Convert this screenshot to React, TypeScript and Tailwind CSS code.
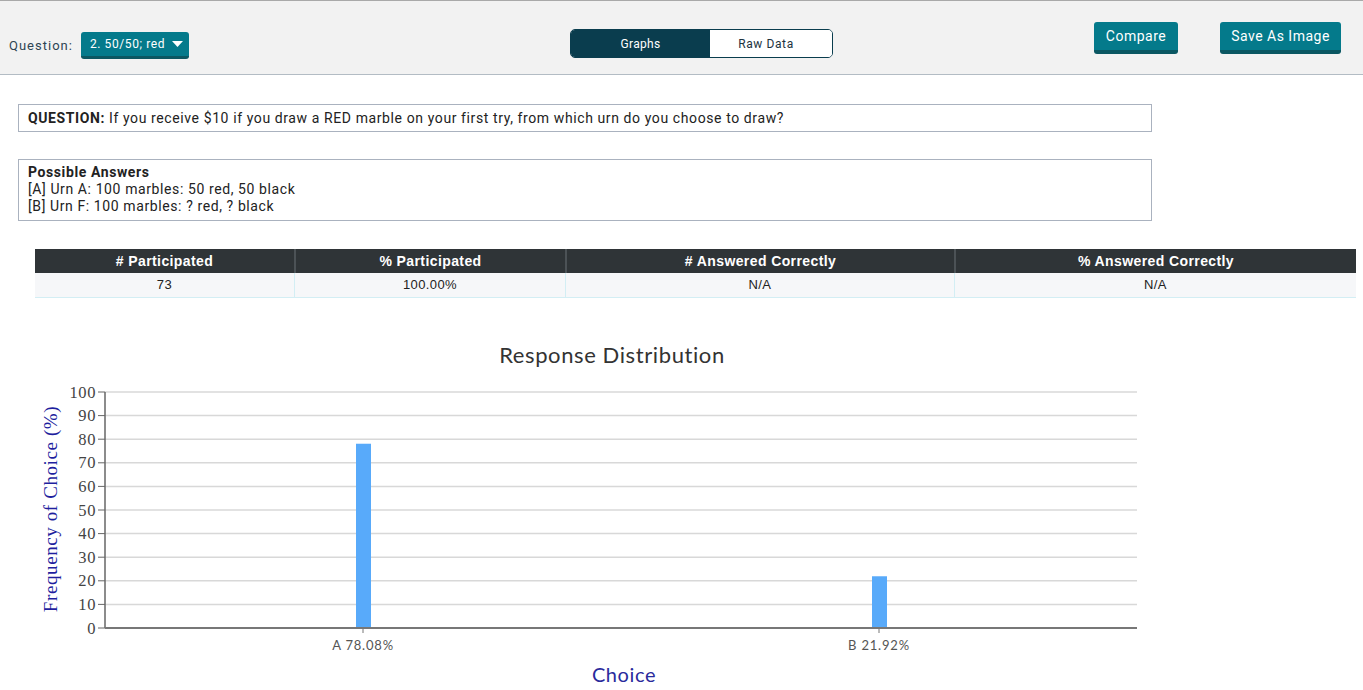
import React from 'react';

const stats = [
  { label: '# Participated', value: '73', w: 'w-[259px]' },
  { label: '% Participated', value: '100.00%', w: 'w-[271px]' },
  { label: '# Answered Correctly', value: 'N/A', w: 'w-[389px]' },
  { label: '% Answered Correctly', value: 'N/A', w: 'flex-1' },
];

const bars = [
  { label: 'A 78.08%', value: 78.08 },
  { label: 'B 21.92%', value: 21.92 },
];

// plot geometry (svg coords, svg top sits at page y=330)
const X0 = 105;
const X1 = 1137;
const Y0 = 298; // value 0
const Y100 = 62; // value 100
const yOf = (v: number) => Y0 - ((Y0 - Y100) * v) / 100;

const Chart: React.FC = () => {
  const ticks = [0, 10, 20, 30, 40, 50, 60, 70, 80, 90, 100];
  const band = (X1 - X0) / bars.length;
  return (
    <svg width={1363} height={360} className="block">
      <text x={612} y={33} textAnchor="middle" fontSize={22} letterSpacing={0.6} fill="#333" fontFamily="Lato, 'Open Sans', sans-serif">
        Response Distribution
      </text>
      {ticks.map((t) => (
        <g key={t}>
          {t > 0 && <line x1={X0} x2={X1} y1={yOf(t)} y2={yOf(t)} stroke="#d8d8d8" strokeWidth={1.5} />}
          <line x1={98} x2={X0} y1={yOf(t)} y2={yOf(t)} stroke="#666" strokeWidth={1} />
          <text x={96} y={yOf(t) + 5.5} textAnchor="end" fontSize={16.5} fill="#444" fontFamily="'Liberation Serif', serif">
            {t}
          </text>
        </g>
      ))}
      {bars.map((b, i) => {
        const cx = X0 + band * (i + 0.5);
        return (
          <g key={b.label}>
            <rect x={cx - 7} y={yOf(b.value)} width={15} height={Y0 - yOf(b.value)} fill="#58aafa" />
            <line x1={cx} x2={cx} y1={Y0} y2={Y0 + 5} stroke="#777" strokeWidth={1} />
            <text x={cx} y={320} textAnchor="middle" fontSize={13} letterSpacing={0.8} fill="#555" fontFamily="Lato, sans-serif">
              {b.label}
            </text>
          </g>
        );
      })}
      <line x1={X0} x2={X0} y1={Y100} y2={Y0} stroke="#666" strokeWidth={1.5} />
      <line x1={X0} x2={X1} y1={Y0} y2={Y0} stroke="#777" strokeWidth={2} />
      <text
        transform="translate(57 179) rotate(-90)"
        textAnchor="middle"
        fontSize={19}
        fill="#1f1f9e"
        fontFamily="'Liberation Serif', serif"
      >
        Frequency of Choice (%)
      </text>
      <text x={624} y={352} textAnchor="middle" fontSize={20} letterSpacing={0.6} fill="#2a2a9c" fontFamily="Lato, sans-serif">
        Choice
      </text>
    </svg>
  );
};

export default function App() {
  return (
    <div className="min-h-[690px] bg-white font-['Roboto',sans-serif] tracking-[0.6px] overflow-hidden">
      {/* top bar */}
      <div className="h-[75px] bg-[#f2f2f2] border-t border-t-[#a9a9a9] border-b border-b-[#b3bcc4] flex items-start pl-[9px]">
        <div className="w-[561px] flex items-center gap-[8px] pt-[31px]">
          <span className="text-[13px] text-[#2e4452] tracking-[1px]">Question:</span>
          <button className="h-[27px] w-[108px] bg-[#047a8b] border-b-[3px] border-[#0b5762] rounded-[3px] text-white text-[12px] flex items-center pl-[9px] gap-[7px]">
            <span>2. 50/50; red</span>
            <svg width="11" height="6" viewBox="0 0 11 6">
              <path d="M0 0 L11 0 L5.5 6 Z" fill="#fff" />
            </svg>
          </button>
        </div>
        <div className="mt-[28px] w-[263px] h-[29px] border border-[#0a3d4e] rounded-[5px] flex overflow-hidden text-[12px] tracking-[0.3px]">
          <div className="w-[139px] bg-[#0a3d4e] text-white flex items-center justify-center">Graphs</div>
          <div className="flex-1 bg-white text-[#1d3340] flex items-center justify-center pr-[10px] tracking-[0.6px]">Raw Data</div>
        </div>
        <button className="mt-[21px] ml-[261px] w-[84px] h-[32px] bg-[#047a8b] border-b-[4px] border-[#0b5762] rounded-[3px] text-white text-[14px] tracking-[0.5px]">
          Compare
        </button>
        <button className="mt-[21px] ml-[42px] w-[121px] h-[32px] bg-[#047a8b] border-b-[4px] border-[#0b5762] rounded-[3px] text-white text-[14px] tracking-[0.5px]">
          Save As Image
        </button>
      </div>

      {/* question */}
      <div className="ml-[18px] mt-[29px] w-[1134px] h-[28px] border border-[#aab2bf] flex items-center px-[9px] text-[14px] text-[#222]">
        <span className="font-bold mr-[4px]">QUESTION:</span>
        If you receive $10 if you draw a RED marble on your first try, from which urn do you choose to draw?
      </div>

      <div className="ml-[18px] mt-[27px] w-[1134px] border border-[#aab2bf] px-[9px] pt-[4px] pb-[5px] text-[14px] leading-[17px] text-[#222]">
        <div className="font-bold">Possible Answers</div>
        <div>[A] Urn A: 100 marbles: 50 red, 50 black</div>
        <div>[B] Urn F: 100 marbles: ? red, ? black</div>
      </div>

      {/* stats table */}
      <div className="ml-[35px] mt-[28px] w-[1321px] text-center font-['Liberation_Sans',sans-serif] tracking-[0.4px]">
        <div className="flex h-[24px] bg-[#2f3437] text-white text-[14px] font-bold">
          {stats.map((s, i) => (
            <div key={s.label} className={`${s.w} flex items-center justify-center ${i > 0 ? 'border-l-2 border-[#4c5256]' : ''}`}>
              {s.label}
            </div>
          ))}
        </div>
        <div className="flex h-[25px] bg-[#f6f7f9] text-[13px] text-[#222] border-b border-[#d3eef4]">
          {stats.map((s, i) => (
            <div key={s.label} className={`${s.w} flex items-center justify-center ${i > 0 ? 'border-l border-[#d3eef4]' : ''}`}>
              {s.value}
            </div>
          ))}
        </div>
      </div>

      <div className="mt-[32px]">
        <Chart />
      </div>
    </div>
  );
}
